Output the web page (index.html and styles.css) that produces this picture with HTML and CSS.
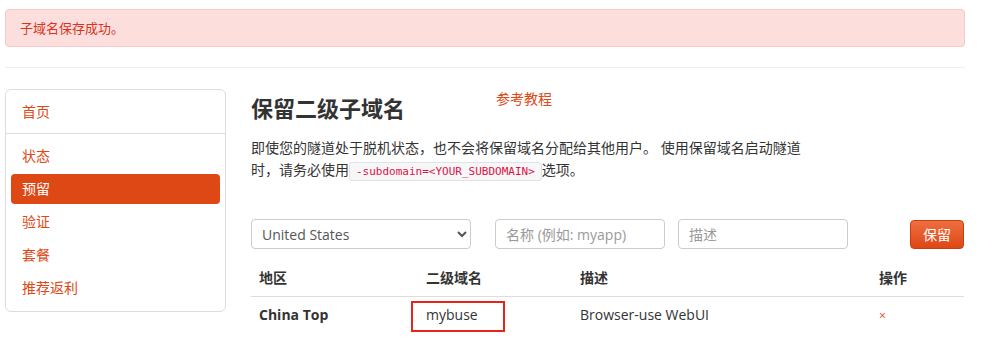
FILE: index.html
```html
<!DOCTYPE html>
<html lang="zh">
<head>
  <meta charset="UTF-8">
  <title>保留二级子域名</title>
  <link rel="stylesheet" href="styles.css">
</head>
<body>
<div class="page">
  <div class="alert">子域名保存成功。</div>
  <hr class="rule">
  <div class="layout">
    <ul class="sidenav">
      <li class="nav-head"><a href="#">首页</a></li>
      <li class="divider"></li>
      <li><a href="#">状态</a></li>
      <li class="active"><a href="#">预留</a></li>
      <li><a href="#">验证</a></li>
      <li><a href="#">套餐</a></li>
      <li><a href="#">推荐返利</a></li>
    </ul>
    <div class="main">
      <div class="title-row">
        <h2>保留二级子域名</h2>
        <a class="guide" href="#">参考教程</a>
      </div>
      <p class="intro">即使您的隧道处于脱机状态，也不会将保留域名分配给其他用户。 使用保留域名启动隧道时，请务必使用<code>-subdomain=&lt;YOUR_SUBDOMAIN&gt;</code>选项。</p>
      <form class="reserve-form" onsubmit="return false">
        <select class="region">
          <option>United States</option>
        </select>
        <input class="name" placeholder="名称 (例如: myapp)">
        <input class="desc" placeholder="描述">
        <button class="btn">保留</button>
      </form>
      <table class="domains">
        <thead>
          <tr><th class="c1">地区</th><th class="c2">二级域名</th><th class="c3">描述</th><th class="c4">操作</th></tr>
        </thead>
        <tbody>
          <tr>
            <td class="region-name">China Top</td>
            <td class="sub"><span class="mark"></span>mybuse</td>
            <td>Browser-use WebUI</td>
            <td><a class="del" href="#">×</a></td>
          </tr>
        </tbody>
      </table>
    </div>
  </div>
</div>
</body>
</html>
```

FILE: styles.css
```css
body {
  margin: 0;
  background: #fff;
  color: #333;
  font-family: "Open Sans", "Noto Sans CJK SC", sans-serif;
  font-size: 14px;
  line-height: 20px;
}
a { color: #dd4814; text-decoration: none; }
.page {
  width: 960px;
  padding: 9px 0 0 5px;
}
.alert {
  background: #fcdedd;
  border: 1px solid #f8c8cc;
  border-radius: 4px;
  color: #d9341e;
  font-size: 13px;
  padding: 8px 14px;
}
.rule {
  border: 0;
  border-top: 1px solid #eee;
  margin: 20px 0 21px;
}
.layout { display: flex; align-items: flex-start; }
.sidenav {
  list-style: none;
  margin: 0;
  padding: 7px 0 5px;
  width: 219px;
  border: 1px solid #ddd;
  border-radius: 6px;
}
.sidenav li { margin: 0 5px 3px; }
.sidenav li a {
  display: block;
  height: 30px;
  line-height: 30px;
  padding-left: 11px;
  border-radius: 4px;
}
.sidenav .nav-head { margin-bottom: 0; }
.sidenav .divider {
  margin: 6px 0 7px;
  height: 1px;
  background: #ddd;
}
.sidenav .active a { background: #dd4814; color: #fff; }
.main { margin-left: 25px; width: 713px; }
.title-row { display: flex; align-items: flex-start; }
.title-row h2 {
  margin: 4px 0 0;
  font-size: 22px;
  line-height: 30px;
  font-weight: bold;
}
.guide { margin-left: 91px; font-size: 14px; }
.intro {
  margin: 14px 0 0;
  width: 560px;
  line-height: 22px;
}
code {
  display: inline-block;
  font-family: "DejaVu Sans Mono", monospace;
  font-size: 11px;
  line-height: 17px;
  color: #dd1144;
  background: #f7f7f9;
  border: 1px solid #e1e1e8;
  border-radius: 3px;
  padding: 0 6px;
}
.reserve-form {
  display: flex;
  align-items: center;
  margin-top: 38px;
}
.reserve-form select, .reserve-form input {
  box-sizing: border-box;
  height: 30px;
  border: 1px solid #ccc;
  border-radius: 4px;
  font-family: inherit;
  font-size: 14px;
  color: #555;
  background: #fff;
  padding: 0 10px;
}
.reserve-form select { padding: 0 6px; }
.region { width: 220px; }
.name { width: 170px; margin-left: 24px; }
.desc { width: 170px; margin-left: 13px; }
::placeholder { color: #999; }
.btn {
  margin-left: auto;
  height: 29px;
  padding: 0 12px;
  border: 1px solid #c8400f;
  border-radius: 4px;
  background: linear-gradient(#ef6e40, #dd4814);
  color: #fff;
  font-family: inherit;
  font-size: 14px;
}
.domains {
  width: 100%;
  margin-top: 11px;
  border-collapse: collapse;
}
.domains th, .domains td {
  text-align: left;
  padding: 0 8px;
  height: 36px;
}
.domains th { border-bottom: 1px solid #ddd; font-weight: bold; }
.c1 { width: 151px; }
.c2 { width: 138px; }
.c3 { width: 283px; }
.region-name { font-weight: bold; }
.sub { position: relative; }
.mark {
  position: absolute;
  left: -7px;
  top: 4px;
  width: 90px;
  height: 27px;
  border: 2px solid #e8231c;
}
.del { font-size: 12px; color: #dd4814; }
```
